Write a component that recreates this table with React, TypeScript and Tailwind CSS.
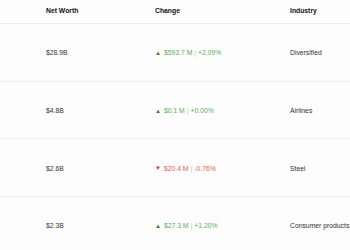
const rows = [
  { worth: '$28.9B', up: true, amount: '$593.7 M', pct: '+2.09%', industry: 'Diversified' },
  { worth: '$4.8B', up: true, amount: '$0.1 M', pct: '+0.00%', industry: 'Airlines' },
  { worth: '$2.6B', up: false, amount: '$20.4 M', pct: '-0.76%', industry: 'Steel' },
  { worth: '$2.3B', up: true, amount: '$27.3 M', pct: '+1.20%', industry: 'Consumer products, beverages' },
]

function Change({ up, amount, pct }: { up: boolean; amount: string; pct: string }) {
  return (
    <div className={`flex items-center whitespace-nowrap ${up ? 'text-[#5cae5c]' : 'text-[#e2644f]'}`}>
      <span className={`mr-[3px] text-[6px] ${up ? 'text-[#2e7d32]' : 'text-[#d4351c]'}`}>{up ? '▲' : '▼'}</span>
      <span>{amount}</span>
      <span className="mx-[2px] text-[#c8c8c8]">|</span>
      <span>{pct}</span>
    </div>
  )
}

export default function App() {
  return (
    <div
      className="h-[250px] w-[350px] overflow-hidden bg-[#fdfdfd] text-[6.8px] text-[#333]"
      style={{ fontFamily: '"Liberation Sans", Arial, sans-serif' }}
    >
      <div className="grid h-[24px] grid-cols-[46px_109px_135px_1fr] items-center border-b border-[#ececec] font-bold text-[#111]">
        <div />
        <div>Net Worth</div>
        <div>Change</div>
        <div>Industry</div>
      </div>
      {rows.map((r) => (
        <div
          key={r.worth}
          className="grid h-[57.7px] grid-cols-[46px_109px_135px_1fr] items-center border-b border-[#ececec] pt-[2px]"
        >
          <div />
          <div>{r.worth}</div>
          <Change up={r.up} amount={r.amount} pct={r.pct} />
          <div className="whitespace-nowrap">{r.industry}</div>
        </div>
      ))}
    </div>
  )
}
